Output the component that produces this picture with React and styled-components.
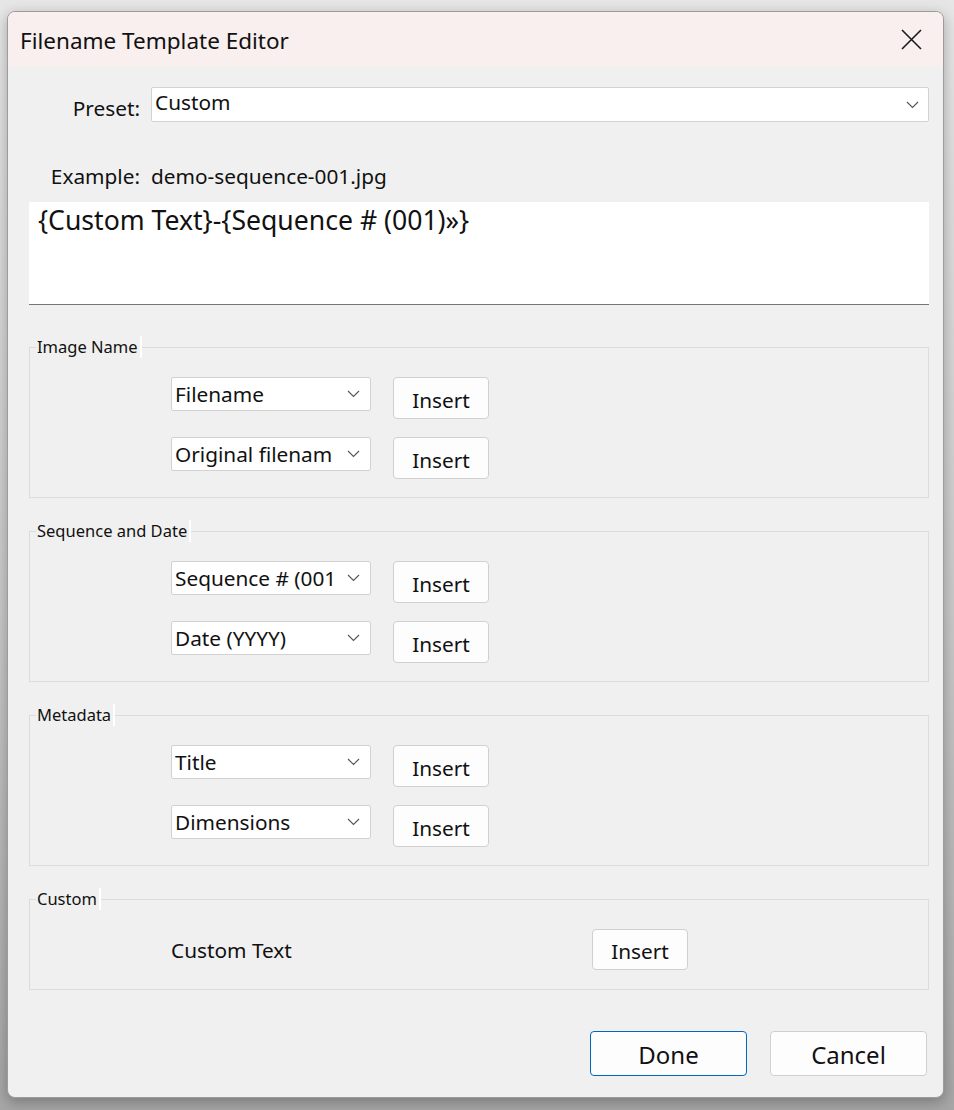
import React from 'react';
import styled, { createGlobalStyle } from 'styled-components';

const GlobalStyle = createGlobalStyle`
  html, body {
    margin: 0;
    padding: 0;
  }
  body {
    font-family: "Noto Sans", "Open Sans", sans-serif;
    color: #111;
  }
`;

const Backdrop = styled.div`
  width: 954px;
  height: 1110px;
  box-sizing: border-box;
  padding: 11px 10px 12px 7px;
  background: linear-gradient(180deg, #e6e6e6 0%, #c9c9c9 55%, #a6a6a6 100%);
`;

const Dialog = styled.div`
  width: 937px;
  height: 1087px;
  display: flex;
  flex-direction: column;
  background: #f0f0f0;
  border: 1px solid #9c9c9c;
  box-sizing: border-box;
  border-radius: 8px;
  overflow: hidden;
  box-shadow: 0 4px 14px rgba(0, 0, 0, 0.28);
`;

const TitleBar = styled.div`
  height: 55px;
  flex: none;
  display: flex;
  align-items: center;
  justify-content: space-between;
  padding: 0 20px 0 12px;
  background: #f9efef;
`;

const Title = styled.div`
  font-size: 22.5px;
  color: #111;
  padding-top: 2px;
`;

const CloseButton = styled.button`
  width: 24px;
  height: 24px;
  padding: 0;
  border: none;
  background: none;
  display: flex;
  align-items: center;
  justify-content: center;
  cursor: pointer;
`;

const Body = styled.div`
  flex: 1;
  display: flex;
  flex-direction: column;
  padding: 20px 14px 21px 21px;
`;

const FieldRow = styled.div`
  display: grid;
  grid-template-columns: 111px 1fr;
  column-gap: 11px;
  align-items: center;
  margin-top: ${(p) => p.$top || 0}px;
`;

const FieldLabel = styled.div`
  text-align: right;
  font-size: 20.8px;
  line-height: 28px;
  padding-top: ${(p) => (p.$drop ? 6 : 0)}px;
`;

const FieldValue = styled.div`
  font-size: 20.8px;
  line-height: 28px;
`;

const Select = styled.div`
  height: ${(p) => p.$height || 34}px;
  width: ${(p) => (p.$width ? `${p.$width}px` : 'auto')};
  box-sizing: border-box;
  background: #ffffff;
  border: 1px solid #d2d2d2;
  border-radius: 2px;
  display: flex;
  align-items: center;
  padding: 0 0 0 3px;
  font-size: 20.8px;
`;

const SelectText = styled.span`
  flex: 1;
  overflow: hidden;
  white-space: nowrap;
  line-height: ${(p) => (p.$high ? 28 : 32)}px;
  align-self: ${(p) => (p.$high ? 'flex-start' : 'center')};
`;

const Chevron = styled.svg`
  flex: none;
  margin: 0 ${(p) => p.$right || 10}px 0 ${(p) => p.$left || 8}px;
`;

const TemplateBox = styled.div`
  margin-top: 12px;
  height: 103px;
  box-sizing: border-box;
  background: #ffffff;
  border-bottom: 1px solid #767676;
  padding: 1px 9px;
  font-size: 26.6px;
  line-height: 34px;
`;

const Group = styled.fieldset`
  margin: ${(p) => p.$top}px 0 0 0;
  padding: 19px 0 ${(p) => p.$bottom || 18}px 0;
  border: 1px solid #dcdcdc;
  min-width: 0;
`;

const Legend = styled.legend`
  font-size: 16.5px;
  line-height: 22px;
  padding: 0 2px 0 1px;
  margin-left: 6px;
  background: #f0f0f0;
  box-shadow: 2px 0 0 #ffffff;
`;

const Rows = styled.div`
  display: flex;
  flex-direction: column;
  gap: 18px;
  padding-left: 141px;
`;

const PickRow = styled.div`
  display: grid;
  grid-template-columns: ${(p) => p.$label || 200}px 96px;
  column-gap: ${(p) => p.$gap ?? 22}px;
  align-items: ${(p) => (p.$center ? 'center' : 'start')};
`;

const CustomLabel = styled.div`
  font-size: 20.8px;
  line-height: 28px;
`;

const InsertButton = styled.button`
  height: ${(p) => p.$height || 42}px;
  box-sizing: border-box;
  background: #fdfdfd;
  border: 1px solid #d0d0d0;
  border-radius: 4px;
  font-family: inherit;
  font-size: 20.8px;
  color: #111;
  padding: 3px 0 0;
  cursor: pointer;
`;

const Footer = styled.div`
  margin-top: auto;
  display: flex;
  justify-content: flex-end;
  gap: 23px;
  padding-right: 2px;
`;

const DialogButton = styled.button`
  width: 157px;
  height: 45px;
  box-sizing: border-box;
  background: #fdfdfd;
  border: 1px solid ${(p) => (p.$primary ? '#0067c0' : '#d0d0d0')};
  border-radius: 4px;
  font-family: inherit;
  font-size: 24px;
  color: #111;
  padding: 2px 0 0;
  cursor: pointer;
`;

const ChevronIcon = ({ left, right }) => (
  <Chevron $left={left} $right={right} width="13" height="8" viewBox="0 0 13 8">
    <path d="M1 1 L6.5 6.5 L12 1" fill="none" stroke="#555" strokeWidth="1.1" />
  </Chevron>
);

const groups = [
  { title: 'Image Name', top: 31, items: ['Filename', 'Original filename'] },
  { title: 'Sequence and Date', top: 22, items: ['Sequence # (001)', 'Date (YYYY)'] },
  { title: 'Metadata', top: 22, items: ['Title', 'Dimensions'] },
];

export default function App() {
  return (
    <>
      <GlobalStyle />
      <Backdrop>
        <Dialog>
          <TitleBar>
            <Title>Filename Template Editor</Title>
            <CloseButton aria-label="Close">
              <svg width="21" height="21" viewBox="0 0 21 21">
                <path d="M1 1 L20 20 M20 1 L1 20" stroke="#1a1a1a" strokeWidth="1.6" fill="none" />
              </svg>
            </CloseButton>
          </TitleBar>
          <Body>
            <FieldRow>
              <FieldLabel $drop>Preset:</FieldLabel>
              <Select $height={35}>
                <SelectText $high>Custom</SelectText>
                <ChevronIcon right={9} />
              </Select>
            </FieldRow>
            <FieldRow $top={40}>
              <FieldLabel>Example:</FieldLabel>
              <FieldValue>demo-sequence-001.jpg</FieldValue>
            </FieldRow>
            <TemplateBox>{'{Custom Text}-{Sequence # (001)»}'}</TemplateBox>

            {groups.map((g) => (
              <Group key={g.title} $top={g.top}>
                <Legend>{g.title}</Legend>
                <Rows>
                  {g.items.map((item) => (
                    <PickRow key={item}>
                      <Select $width={200}>
                        <SelectText>{item}</SelectText>
                        <ChevronIcon left={14} />
                      </Select>
                      <InsertButton>Insert</InsertButton>
                    </PickRow>
                  ))}
                </Rows>
              </Group>
            ))}

            <Group $top={22} $bottom={19}>
              <Legend>Custom</Legend>
              <Rows>
                <PickRow $label={421} $gap={0} $center>
                  <CustomLabel>Custom Text</CustomLabel>
                  <InsertButton $height={41}>Insert</InsertButton>
                </PickRow>
              </Rows>
            </Group>

            <Footer>
              <DialogButton $primary>Done</DialogButton>
              <DialogButton>Cancel</DialogButton>
            </Footer>
          </Body>
        </Dialog>
      </Backdrop>
    </>
  );
}
